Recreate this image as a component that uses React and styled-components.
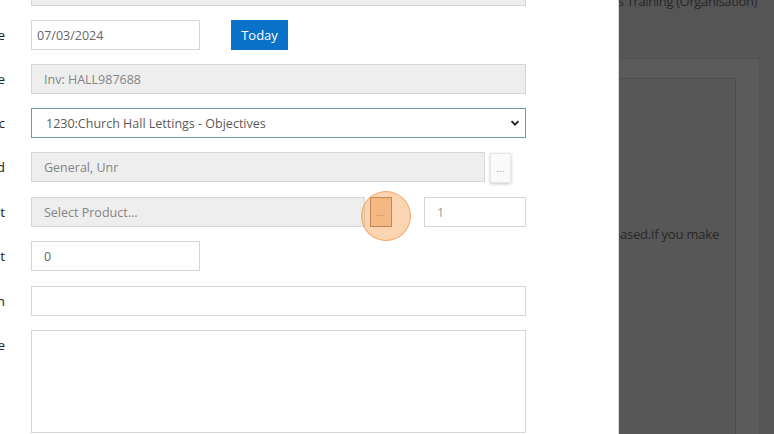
import styled, { createGlobalStyle } from 'styled-components';

const Global = createGlobalStyle`
  html, body { margin: 0; padding: 0; }
  body {
    width: 774px;
    height: 434px;
    overflow: hidden;
    font-family: "Open Sans", "Liberation Sans", sans-serif;
    background: #555555;
  }
`

const Page = styled.div`
  display: flex;
  width: 774px;
  height: 434px;
  overflow: hidden;
`

const Modal = styled.div`
  width: 618px;
  height: 434px;
  flex-shrink: 0;
  background: #ffffff;
  border-right: 1px solid #d8d8d8;
  overflow: hidden;
`

// the modal is scrolled, labels are mostly cut off on the left
const Form = styled.div`
  display: flex;
  flex-direction: column;
  gap: 14px;
  margin-top: -24px;
  margin-left: -94px;
`

const Row = styled.div`
  display: flex;
  align-items: flex-start;
  margin-top: ${p => p.shift || 0}px;
`

const Label = styled.div`
  width: 125px;
  flex-shrink: 0;
  padding-right: 26px;
  box-sizing: border-box;
  text-align: right;
  font-size: 13.5px;
  color: #222;
  line-height: 30px;
  white-space: nowrap;
`

const Field = styled.div`
  display: flex;
  align-items: flex-start;
  gap: ${p => p.gap || 5}px;
`

const Input = styled.div`
  box-sizing: border-box;
  width: ${p => p.w}px;
  height: ${p => p.h || 30}px;
  border: 1px solid ${p => (p.focus ? '#6d9aad' : '#d6d6d6')};
  background: ${p => (p.disabled ? '#eeeeee' : '#ffffff')};
  padding: 0 ${p => p.pad || 5}px;
  display: flex;
  align-items: ${p => (p.area ? 'flex-start' : 'center')};
  font-size: 12.5px;
  color: ${p => p.color || (p.disabled ? '#858585' : '#666666')};
  white-space: nowrap;
  overflow: hidden;
`

const Select = styled(Input)`
  justify-content: space-between;
  color: #5a5a5a;
  padding-right: 4px;
`

const TodayButton = styled.div`
  margin-left: 26px;
  width: 57px;
  height: 30px;
  background: #0a72c8;
  color: #fff;
  font-size: 13px;
  display: flex;
  align-items: center;
  justify-content: center;
`

const DotsButton = styled.div`
  position: relative;
  box-sizing: border-box;
  width: ${p => p.w || 21}px;
  height: 30px;
  margin-top: ${p => p.top || 0}px;
  background: ${p => (p.hot ? '#f2c7a3' : '#fafafa')};
  border: 1px solid ${p => (p.hot ? '#86654c' : '#e6e6e6')};
  box-shadow: ${p => (p.hot ? 'none' : '0 1px 3px rgba(0,0,0,0.22)')};
  color: ${p => (p.hot ? '#a88062' : '#999')};
  font-size: 9px;
  display: flex;
  align-items: center;
  justify-content: center;
  letter-spacing: 0.5px;
`

// click marker drawn over the button
const Highlight = styled.div`
  position: absolute;
  left: 50%;
  top: 50%;
  width: 48px;
  height: 48px;
  margin-left: -20px;
  margin-top: -21px;
  border-radius: 50%;
  background: rgba(248, 170, 100, 0.5);
  border: 1.5px solid rgba(245, 160, 90, 0.85);
  pointer-events: none;
`

const Dots = styled.span`
  position: relative;
`

const Backdrop = styled.div`
  flex: 1;
  display: flex;
  flex-direction: column;
  overflow: hidden;
  background: #555555;
`

const TopBar = styled.div`
  height: 58px;
  display: flex;
  justify-content: flex-end;
  padding-right: 17px;
  overflow: hidden;
`

const Title = styled.div`
  font-size: 13px;
  letter-spacing: -0.35px;
  color: #262626;
  white-space: nowrap;
  line-height: 14px;
  margin-top: -6px;
`

const Outer = styled.div`
  flex: 1;
  display: flex;
  margin-right: 15px;
  background: #5b5b5b;
  border-top: 1px solid #515151;
  padding-top: 19px;
`

const Inner = styled.div`
  width: 116px;
  background: #575757;
  border-top: 1px solid #4e4e4e;
  border-right: 1px solid #4b4b4b;
  padding-top: 146px;
  overflow: hidden;
`

const Hint = styled.div`
  font-size: 13px;
  letter-spacing: -0.2px;
  color: #272727;
  white-space: nowrap;
  display: flex;
  justify-content: flex-end;
  padding-right: 16px;
`

export default function App() {
  return (
    <Page>
      <Global />
      <Modal>
        <Form>
          <Row>
            <Label>Supplier</Label>
            <Field><Input w={495} disabled /></Field>
          </Row>
          <Row>
            <Label>Invoice Date</Label>
            <Field>
              <Input w={169}>07/03/2024</Input>
              <TodayButton>Today</TodayButton>
            </Field>
          </Row>
          <Row>
            <Label>Reference</Label>
            <Field><Input w={495} disabled pad={12}>Inv: HALL987688</Input></Field>
          </Row>
          <Row>
            <Label>Nominal Acc</Label>
            <Field>
              <Select w={495} focus pad={14}>
                <span>1230:Church Hall Lettings - Objectives</span>
                <svg width="12" height="12" viewBox="0 0 12 12">
                  <path d="M2.5 4.2 L6 7.7 L9.5 4.2" fill="none" stroke="#222" strokeWidth="1.9" />
                </svg>
              </Select>
            </Field>
          </Row>
          <Row>
            <Label>Fund</Label>
            <Field>
              <Input w={454} disabled pad={12}>General, Unr</Input>
              <DotsButton top={1}>...</DotsButton>
            </Field>
          </Row>
          <Row>
            <Label>Product</Label>
            <Field>
              <Input w={334} disabled pad={12}>Select Product...</Input>
              <DotsButton hot w={22}>
                <Highlight />
                <Dots>...</Dots>
              </DotsButton>
              <Input w={102} pad={12} color="#9a9a9a" style={{ marginLeft: 27 }}>1</Input>
            </Field>
          </Row>
          <Row>
            <Label>Amount</Label>
            <Field><Input w={169} pad={12}>0</Input></Field>
          </Row>
          <Row shift={1}>
            <Label>Description</Label>
            <Field><Input w={495} /></Field>
          </Row>
          <Row>
            <Label>Notice</Label>
            <Field><Input w={495} h={103} area /></Field>
          </Row>
        </Form>
      </Modal>
      <Backdrop>
        <TopBar>
          <Title>Fees Training (Organisation)</Title>
        </TopBar>
        <Outer>
          <Inner>
            <Hint>will be purchased.if you make</Hint>
          </Inner>
        </Outer>
      </Backdrop>
    </Page>
  );
}
